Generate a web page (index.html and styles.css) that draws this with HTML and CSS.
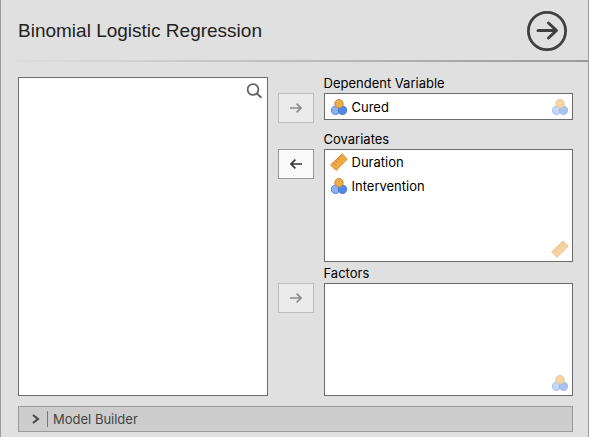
FILE: index.html
```html
<!DOCTYPE html>
<html lang="en">
<head>
<meta charset="utf-8">
<title>Binomial Logistic Regression</title>
<link rel="stylesheet" href="styles.css">
</head>
<body>
<svg class="defs" aria-hidden="true">
  <symbol id="nominal" viewBox="0 0 16 16">
    <circle cx="4.5" cy="11.3" r="4.2" fill="#8fb2ee" stroke="#4c7fe0"/>
    <circle cx="11.5" cy="11.3" r="4.2" fill="#5587e4" stroke="#3f74dc"/>
    <circle cx="8" cy="4.7" r="4.2" fill="#ecae4a" stroke="#c98c35"/>
  </symbol>
  <symbol id="continuous" viewBox="0 0 16 16" overflow="visible">
    <path d="M11.3-.2 16.2 5.3 5 16.4-.4 10.9z" fill="#eeaa45" stroke="#dc8d25" stroke-linejoin="round"/>
    <path d="m2.4 8.6 2 2.1M4.6 6.5l1.4 1.5M6.8 4.3l2 2.1M9 2.1l1.4 1.5" fill="none" stroke="#c87c22"/>
  </symbol>
  <symbol id="arrow" viewBox="0 0 12 12">
    <path d="M0 6h11M6.6 1.6 11 6l-4.4 4.4" fill="none" stroke="currentColor" stroke-width="1.6"/>
  </symbol>
</svg>
<main class="panel">
  <header class="header">
    <h1 class="title">Binomial Logistic Regression</h1>
    <button class="close" type="button" aria-label="Close options">
      <svg viewBox="0 0 40 40"><circle cx="20" cy="20" r="18.6" fill="none" stroke="currentColor" stroke-width="2.8"/><path d="M11 19.5h18M21.5 12l8 7.5-8 7.5" fill="none" stroke="currentColor" stroke-width="3" stroke-linecap="round" stroke-linejoin="round"/></svg>
    </button>
  </header>
  <div class="rule"></div>
  <div class="content">
    <div class="assign">
      <section class="box source" aria-label="Available variables">
        <button class="search" type="button" aria-label="Search">
          <svg viewBox="0 0 16 16"><circle cx="7" cy="6.5" r="5.4" fill="none" stroke="currentColor" stroke-width="1.8"/><path d="m10.8 10.3 4.5 4.5" stroke="currentColor" stroke-width="2"/></svg>
        </button>
      </section>
      <button class="move" type="button" disabled aria-label="Assign dependent variable"><svg><use href="#arrow"/></svg></button>
      <section class="target target-single">
        <h2 class="label">Dependent Variable</h2>
        <div class="box">
          <ul class="items"><li class="item"><svg class="icon"><use href="#nominal"/></svg>Cured</li></ul>
          <svg class="icon permitted"><use href="#nominal"/></svg>
        </div>
      </section>
      <button class="move move-back" type="button" aria-label="Remove covariate"><svg><use href="#arrow"/></svg></button>
      <section class="target">
        <h2 class="label">Covariates</h2>
        <div class="box">
          <ul class="items">
            <li class="item"><svg class="icon"><use href="#continuous"/></svg>Duration</li>
            <li class="item"><svg class="icon"><use href="#nominal"/></svg>Intervention</li>
          </ul>
          <svg class="icon permitted"><use href="#continuous"/></svg>
        </div>
      </section>
      <button class="move" type="button" disabled aria-label="Assign factor"><svg><use href="#arrow"/></svg></button>
      <section class="target">
        <h2 class="label">Factors</h2>
        <div class="box">
          <svg class="icon permitted"><use href="#nominal"/></svg>
        </div>
      </section>
    </div>
    <button class="collapse" type="button" aria-expanded="false">
      <svg class="chevron" viewBox="0 0 8 10"><path d="m1 1 5 4-5 4" fill="none" stroke="currentColor" stroke-width="2"/></svg>
      <span class="collapse-text">Model Builder</span>
    </button>
  </div>
</main>
</body>
</html>
```
FILE: styles.css
```css
* {
  box-sizing: border-box;
}

body {
  margin: 0;
  background: #e0e0e0;
  color: #000;
  font: 13px/16px Inter, "Liberation Sans", sans-serif;
}

button {
  margin: 0;
  padding: 0;
  font: inherit;
}

svg {
  display: block;
}

.defs {
  position: absolute;
  width: 0;
  height: 0;
}

.panel {
  min-height: 100vh;
  border: solid #9a9a9a;
  border-width: 0 1px;
}

.header {
  display: flex;
  align-items: center;
  justify-content: space-between;
  height: 60px;
  padding: 2px 21px 0 17px;
}

.title {
  margin: 0;
  color: #222;
  font: 19px/24px "Liberation Sans", Arial, sans-serif;
}

.close {
  width: 40px;
  height: 40px;
  border: 0;
  background: none;
  color: #404040;
}

.rule {
  height: 2px;
  background: linear-gradient(to right, #e0e0e0, #999);
}

.content {
  padding: 15px 15px 5px 17px;
}

.assign {
  display: grid;
  grid-template-columns: 1fr 36px 1fr;
  gap: 5px 10px;
}

.box {
  position: relative;
  border: 1px solid #6b6b6b;
  background: #fff;
}

.source {
  grid-row: span 3;
}

.search {
  position: absolute;
  top: 5px;
  right: 5px;
  width: 16px;
  height: 16px;
  border: 0;
  background: none;
  color: #666;
}

.move {
  display: flex;
  align-items: center;
  justify-content: center;
  height: 30px;
  margin-top: 16px;
  border: 1px solid #999;
  background: #fafafa;
  color: #333;
}

.move:disabled {
  border-color: #bdbdbd;
  background: #ebebeb;
  color: #8a8a8a;
}

.move svg {
  width: 12px;
  height: 12px;
}

.move-back svg {
  transform: scaleX(-1);
}

.label {
  margin: 0;
  padding-bottom: 3px;
  font: inherit;
  line-height: 13px;
}

.target .box {
  height: 113px;
}

.target-single {
  padding-bottom: 8px;
}

.target-single .box {
  height: 27px;
}

.items {
  margin: 0;
  padding: 0 6px;
  list-style: none;
}

.item {
  display: flex;
  align-items: center;
  gap: 5px;
  height: 24px;
}

.target-single .item {
  height: 25px;
}

.icon {
  flex: none;
  width: 16px;
  height: 16px;
  overflow: visible;
}

.permitted {
  position: absolute;
  right: 4px;
  bottom: 4px;
  opacity: 0.5;
}

.collapse {
  display: flex;
  align-items: center;
  width: 100%;
  height: 26px;
  margin-top: 10px;
  padding-left: 13px;
  border: 1px solid #999;
  background: #cdcdcd;
  color: #444;
}

.chevron {
  width: 8px;
  height: 10px;
}

.collapse-text {
  margin-left: 7px;
  padding-left: 5px;
  border-left: 1px solid #777;
}
```
